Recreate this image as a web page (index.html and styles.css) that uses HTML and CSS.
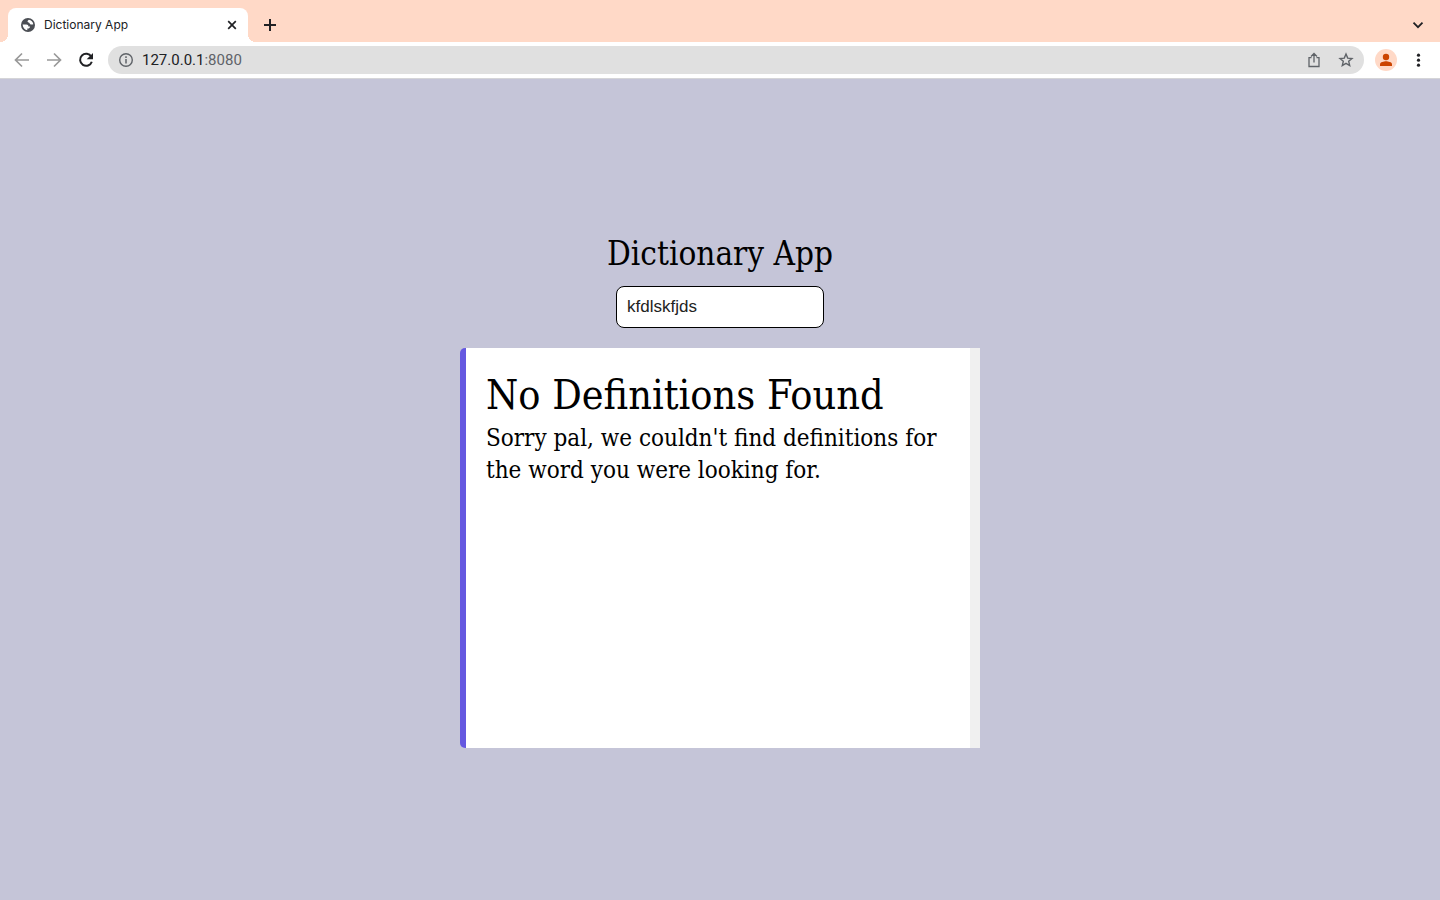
FILE: index.html
```html
<!DOCTYPE html>
<html lang="en">
<head>
<meta charset="utf-8">
<title>Dictionary App</title>
<link rel="stylesheet" href="styles.css">
</head>
<body>
<header class="browser">
  <div class="tabstrip">
    <div class="tab">
      <svg class="globe" width="16" height="16" viewBox="0 0 16 16"><circle cx="8" cy="8" r="7" fill="#4b4e54"/><path d="M2.600 7.600H6.300C7.700 7.600 8.400 8.300 8.400 9.400H10.100C10 10.800 9.100 11.500 7.300 11.400V13.300C5 13 2.800 11 2.600 7.600ZM8.900 2.700C7.300 3.700 7.200 4.700 8.100 5.300C8.900 5.800 9.500 5.600 9.700 6.600C9.900 7.600 11.600 7.800 13.300 7.300C13 4.800 11.100 2.900 8.900 2.700Z" fill="#fff"/></svg>
      <span class="tab-title">Dictionary App</span>
      <button class="icon-button tab-close" aria-label="Close tab"><svg width="16" height="16" viewBox="0 0 16 16"><path d="M4.200 4.200L11.800 11.800M11.800 4.200L4.200 11.800" stroke="#202124" stroke-width="1.700"/></svg></button>
    </div>
    <button class="icon-button" aria-label="New tab"><svg width="16" height="16" viewBox="0 0 16 16"><path d="M2 8H14M8 2V14" stroke="#202124" stroke-width="2"/></svg></button>
    <button class="icon-button tab-search" aria-label="Search tabs"><svg width="16" height="16" viewBox="0 0 16 16"><path d="M3.500 5.700L8 10.200L12.500 5.700" fill="none" stroke="#202124" stroke-width="1.800"/></svg></button>
  </div>
  <div class="toolbar">
    <nav class="nav" aria-label="History">
      <button class="icon-button" aria-label="Back"><svg width="16" height="16" viewBox="0 0 16 16"><path d="M15 8H2.500M8 1.500L1.500 8L8 14.500" fill="none" stroke="#999" stroke-width="1.700"/></svg></button>
      <button class="icon-button" aria-label="Forward"><svg width="16" height="16" viewBox="0 0 16 16"><path d="M1 8H13.500M8 1.500L14.500 8L8 14.500" fill="none" stroke="#999" stroke-width="1.700"/></svg></button>
      <button class="icon-button" aria-label="Reload"><svg width="16" height="16" viewBox="0 0 16 16"><path d="M13.300 4.800A6 6 0 1 0 13.800 9.700" fill="none" stroke="#202124" stroke-width="2"/><path d="M15 1V7.300H8.700Z" fill="#202124"/></svg></button>
    </nav>
    <div class="omnibox">
      <svg width="16" height="16" viewBox="0 0 16 16"><circle cx="8" cy="8" r="6.300" fill="none" stroke="#5f6368" stroke-width="1.400"/><path d="M8 7V11.500M8 4.300V5.900" stroke="#5f6368" stroke-width="1.500"/></svg>
      <span class="address">127.0.0.1<span class="port">:8080</span></span>
      <button class="icon-button" aria-label="Share"><svg width="16" height="16" viewBox="0 0 16 16"><path d="M5.500 5.600H3V14.500H13V5.600H10.500M8 10.500V2M5 4.500L8 1.500L11 4.500" fill="none" stroke="#5f6368" stroke-width="1.300"/></svg></button>
      <button class="icon-button" aria-label="Bookmark"><svg width="16" height="16" viewBox="0 0 16 16"><path d="M8 2.100L9.700 6.100L14 6.500L10.700 9.300L11.700 13.600L8 11.300L4.300 13.600L5.300 9.300L2 6.500L6.300 6.100Z" fill="none" stroke="#5f6368" stroke-width="1.400"/></svg></button>
    </div>
    <button class="icon-button profile" aria-label="Profile"><svg width="22" height="22" viewBox="0 0 22 22"><circle cx="11" cy="11" r="11" fill="#ffd9c7"/><circle cx="11" cy="8" r="3.200" fill="#cc4400"/><path d="M5 17V15.200C5 13.200 9 12.300 11 12.300S17 13.200 17 15.200V17Z" fill="#cc4400"/></svg></button>
    <button class="icon-button menu" aria-label="Menu"><svg width="16" height="16" viewBox="0 0 16 16"><g fill="#202124"><circle cx="8.500" cy="3.200" r="1.600"/><circle cx="8.500" cy="8.200" r="1.600"/><circle cx="8.500" cy="13.200" r="1.600"/></g></svg></button>
  </div>
</header>
<main class="page">
  <h1 class="app-title">Dictionary App</h1>
  <input class="search" type="text" value="kfdlskfjds" aria-label="Word to look up">
  <section class="result">
    <h2 class="result-title">No Definitions Found</h2>
    <p class="result-text">Sorry pal, we couldn't find definitions for the word you were looking for.</p>
  </section>
</main>
</body>
</html>
```
FILE: styles.css
```css
* {
  box-sizing: border-box;
}

body {
  margin: 0;
  min-height: 100vh;
  display: flex;
  flex-direction: column;
  background: #c5c5d8;
  color: #000;
  font-family: "Roboto Slab", "DejaVu Serif Condensed", "DejaVu Serif", serif;
}

svg {
  display: block;
  flex: none;
}

.browser {
  font-family: Inter, "Liberation Sans", sans-serif;
  color: #202124;
  background: #fff;
  border-bottom: 1px solid #d5d5d8;
}

.icon-button {
  flex: none;
  padding: 0;
  border: 0;
  background: none;
}

.tabstrip {
  display: flex;
  align-items: center;
  gap: 14px;
  height: 42px;
  padding: 8px 14px 0 8px;
  background: #ffd9c7;
}

.tab {
  position: relative;
  display: flex;
  align-items: center;
  gap: 8px;
  width: 240px;
  height: 34px;
  padding: 0 8px 0 12px;
  border-radius: 8px 8px 0 0;
  background: #fff;
  font-size: 12px;
  line-height: 16px;
}

.tab::before,
.tab::after {
  content: "";
  position: absolute;
  bottom: 0;
  width: 8px;
  height: 8px;
}

.tab::before {
  right: 100%;
  background: radial-gradient(circle at 0 0, #ffd9c7 8px, #fff 8px);
}

.tab::after {
  left: 100%;
  background: radial-gradient(circle at 100% 0, #ffd9c7 8px, #fff 8px);
}

.tab-title {
  flex: 1;
}

.tab-search {
  margin-left: auto;
}

.toolbar {
  display: flex;
  align-items: center;
  height: 36px;
  padding: 0 14px;
}

.nav {
  display: flex;
  gap: 16px;
  margin-right: 14px;
}

.omnibox {
  flex: 1;
  display: flex;
  align-items: center;
  gap: 16px;
  height: 28px;
  padding: 0 10px;
  border-radius: 14px;
  background: #e0e0e0;
}

.address {
  flex: 1;
  margin-left: -8px;
  font-family: Roboto, sans-serif;
  font-size: 15px;
}

.port {
  color: #5f6368;
}

.profile {
  margin-left: 11px;
}

.menu {
  margin-left: 13px;
}

.page {
  flex: 1;
  display: flex;
  flex-direction: column;
  align-items: center;
  justify-content: center;
  padding: 20px;
}

.app-title {
  margin: 0 0 10px;
  font-size: 33px;
  font-weight: 300;
  line-height: 45px;
}

.search {
  width: 208px;
  height: 42px;
  padding: 0 10px;
  border: 1px solid #000;
  border-radius: 8px;
  background: #fff;
  color: #222;
  font-family: "Liberation Sans", Arial, sans-serif;
  font-size: 17px;
}

.result {
  width: 100%;
  max-width: 520px;
  min-height: 400px;
  margin-top: 20px;
  padding: 20px;
  border-left: 6px solid #6558e0;
  border-right: 10px solid #f0f0f0;
  border-radius: 5px 0 0 5px;
  background: #fff;
}

.result-title {
  margin: 0;
  font-size: 41px;
  font-weight: 300;
  line-height: 54px;
}

.result-text {
  margin: 0;
  font-size: 24px;
  font-weight: 300;
  line-height: 32px;
}
```
